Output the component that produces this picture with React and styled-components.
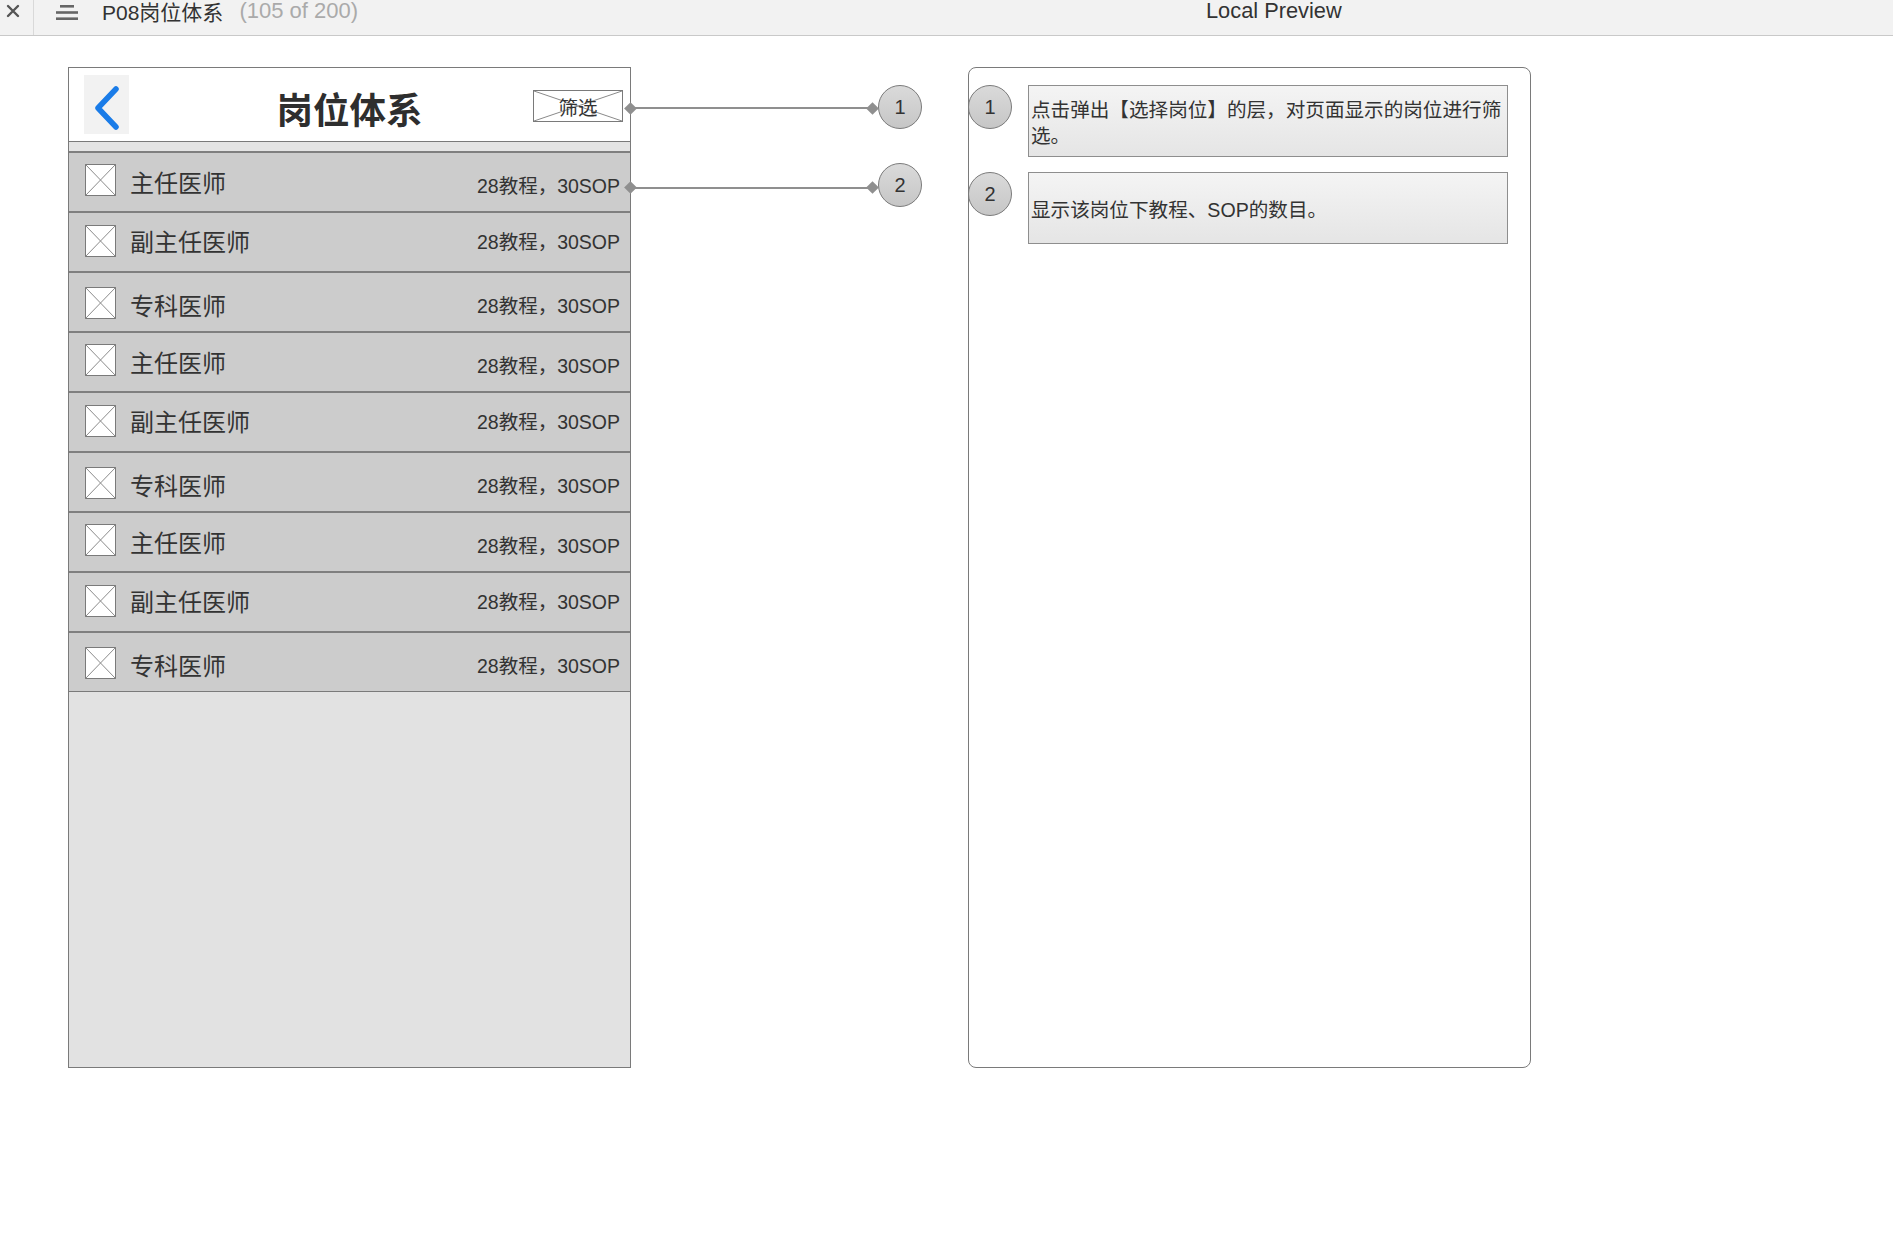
import React from "react";
import styled, { createGlobalStyle } from "styled-components";

const Global = createGlobalStyle`
  html, body { margin: 0; padding: 0; background: #ffffff; }
  body { font-family: "Liberation Sans", "Noto Sans CJK SC", sans-serif; color: #333333; }
  * { box-sizing: border-box; }
`;

const FONT = `"Liberation Sans", "Noto Sans CJK SC", sans-serif`;

const Page = styled.div`
  width: 1893px;
  min-height: 1245px;
  background: #ffffff;
`;

/* ---------- top bar ---------- */
const TopBar = styled.header`
  height: 36px;
  background: #f2f2f2;
  border-bottom: 1px solid #c9c9c9;
  display: flex;
  align-items: flex-start;
`;

const CloseCell = styled.div`
  width: 34px;
  height: 35px;
  border-right: 1px solid #d9d9d9;
  display: flex;
  justify-content: center;
  padding-top: 4px;
  padding-right: 7px;
`;

const LeftGroup = styled.div`
  flex: 0 0 1172px;
  height: 22px;
  display: flex;
  align-items: center;
  padding-left: 22px;
`;

const Menu = styled.div`
  display: flex;
  align-items: center;
  margin-right: 22px;
  padding-top: 4px;
`;

const DocTitle = styled.span`
  font-family: ${FONT};
  font-size: 21px;
  color: #333333;
  white-space: nowrap;
`;

const DocCount = styled.span`
  font-family: ${FONT};
  font-size: 22px;
  color: #aaaaaa;
  margin-left: 16px;
  white-space: nowrap;
`;

const PreviewLabel = styled.div`
  height: 22px;
  display: flex;
  align-items: center;
  font-family: ${FONT};
  font-size: 21.8px;
  color: #333333;
  white-space: nowrap;
`;

/* ---------- canvas ---------- */
const Canvas = styled.main`
  display: flex;
  align-items: flex-start;
  padding: 31px 0 0 68px;
`;

/* ---------- phone ---------- */
const Phone = styled.section`
  width: 563px;
  height: 1001px;
  border: 1px solid #7a7a7a;
  background: #e2e2e2;
  display: flex;
  flex-direction: column;
`;

const Header = styled.div`
  height: 74px;
  flex: 0 0 74px;
  background: #ffffff;
  border-bottom: 1px solid #7a7a7a;
  display: grid;
  grid-template-columns: 1fr auto 1fr;
  align-items: center;
  padding: 0 7px;
`;

const BackButton = styled.div`
  width: 45px;
  height: 59px;
  margin-left: 8px;
  background: #f2f2f2;
  display: flex;
  align-items: center;
  justify-content: center;
  justify-self: start;
  padding-top: 7px;
`;

const Title = styled.h1`
  margin: 8px 0 0;
  font-family: ${FONT};
  font-size: 36.5px;
  font-weight: 700;
  color: #2e2e2e;
`;

const FilterButton = styled.div`
  justify-self: end;
  position: relative;
  width: 90px;
  height: 32px;
  background: #ffffff;
  border: 1px solid #7a7a7a;
  display: flex;
  align-items: center;
  justify-content: center;
  margin-top: 3px;
`;

const FilterCross = styled.svg`
  position: absolute;
  inset: 0;
  width: 100%;
  height: 100%;
`;

const FilterText = styled.span`
  position: relative;
  font-family: ${FONT};
  font-size: 19.5px;
  color: #333333;
`;

const Strip = styled.div`
  height: 9px;
  flex: 0 0 9px;
  background: #e4e4e4;
`;

const List = styled.div`
  display: flex;
  flex-direction: column;
  border-bottom: 1px solid #7a7a7a;
`;

const Row = styled.div`
  height: 60px;
  background: #cccccc;
  border-top: 2px solid #7f7f7f;
  display: flex;
  align-items: center;
  padding: 0 10px 0 16px;
`;

const Thumb = styled.svg`
  flex: 0 0 31px;
  width: 31px;
  height: 32px;
  margin-top: ${(p) => p.$dy * 2}px;
`;

const RoleName = styled.span`
  margin-left: 14px;
  font-family: ${FONT};
  font-size: 24px;
  color: #333333;
  margin-top: ${(p) => p.$dy * 2}px;
  white-space: nowrap;
`;

const RoleStats = styled.span`
  margin-left: auto;
  font-family: ${FONT};
  font-size: 19.5px;
  color: #333333;
  margin-top: ${(p) => p.$dy * 2}px;
  white-space: nowrap;
`;

/* ---------- annotation markers ---------- */
const MarkerColumn = styled.div`
  width: 337px;
  padding-top: 18px;
  display: flex;
  flex-direction: column;
  gap: 34px;
`;

const Marker = styled.div`
  height: 44px;
  display: flex;
  align-items: center;
`;

const Lead = styled.div`
  position: relative;
  width: 242px;
  height: 2px;
  background: #8f8f8f;
  margin-left: -1px;
  margin-top: ${(p) => p.$dy * 2}px;

  &::before,
  &::after {
    content: "";
    position: absolute;
    top: -3.5px;
    width: 9px;
    height: 9px;
    background: #8f8f8f;
    transform: rotate(45deg);
  }
  &::before { left: -4.5px; }
  &::after { right: -4.5px; }
`;

const Badge = styled.div`
  flex: 0 0 44px;
  width: 44px;
  height: 44px;
  border-radius: 50%;
  border: 1.5px solid #7a7a7a;
  background: linear-gradient(180deg, #dadada 0%, #c6c6c6 100%);
  display: flex;
  align-items: center;
  justify-content: center;
  font-family: ${FONT};
  font-size: 20px;
  color: #333333;
  margin-left: ${(p) => p.$gap || 0}px;
`;

/* ---------- notes panel ---------- */
const Notes = styled.section`
  width: 563px;
  height: 1001px;
  border: 1px solid #7a7a7a;
  border-radius: 8px;
  background: #ffffff;
  padding-top: 17px;
  display: flex;
  flex-direction: column;
  gap: 15px;
`;

const NoteRow = styled.div`
  display: flex;
  align-items: flex-start;
  margin-left: -1px;
`;

const NoteBox = styled.div`
  width: 480px;
  min-height: 72px;
  margin-left: 16px;
  border: 1px solid #8e8e8e;
  background: linear-gradient(180deg, #f4f4f4 0%, #e5e5e5 100%);
  display: flex;
  align-items: center;
  padding: 4px 2px 0;
  font-family: ${FONT};
  font-size: 19.6px;
  line-height: 26px;
  color: #333333;
`;

const Cross = (props) => (
  <Thumb viewBox="0 0 31 32" preserveAspectRatio="none" {...props}>
    <rect x="0.5" y="0.5" width="30" height="31" fill="#ffffff" stroke="#7a7a7a" strokeWidth="1" />
    <line x1="0.5" y1="0.5" x2="30.5" y2="31.5" stroke="#8a8a8a" strokeWidth="1" />
    <line x1="30.5" y1="0.5" x2="0.5" y2="31.5" stroke="#8a8a8a" strokeWidth="1" />
  </Thumb>
);

const ROLES = [
  { name: "主任医师", t: -2.5, n: -0.5, s: 2 },
  { name: "副主任医师", t: -1.5, n: -2, s: -2 },
  { name: "专科医师", t: 1, n: 2.5, s: 2 },
];

const rows = Array.from({ length: 9 }, (_, i) => ROLES[i % 3]);

export default function App() {
  return (
    <Page>
      <Global />
      <TopBar>
        <CloseCell>
          <svg width="14" height="14" viewBox="0 0 14 14">
            <path d="M2 2 L12 12 M12 2 L2 12" stroke="#555555" strokeWidth="2.4" strokeLinecap="round" />
          </svg>
        </CloseCell>
        <LeftGroup>
          <Menu>
            <svg width="24" height="16" viewBox="0 0 24 16">
              <rect x="4" y="0" width="14" height="2.6" fill="#666666" />
              <rect x="0" y="6.2" width="22" height="2.6" fill="#666666" />
              <rect x="0" y="12.4" width="22" height="2.6" fill="#666666" />
            </svg>
          </Menu>
          <DocTitle>P08岗位体系</DocTitle>
          <DocCount>(105 of 200)</DocCount>
        </LeftGroup>
        <PreviewLabel>Local Preview</PreviewLabel>
      </TopBar>

      <Canvas>
        <Phone>
          <Header>
            <BackButton>
              <svg width="28" height="44" viewBox="0 0 28 44">
                <polyline points="23,3 5,22 23,41" fill="none" stroke="#1a7ce8" strokeWidth="5.5" strokeLinecap="round" strokeLinejoin="round" />
              </svg>
            </BackButton>
            <Title>岗位体系</Title>
            <FilterButton>
              <FilterCross viewBox="0 0 88 30" preserveAspectRatio="none">
                <line x1="0" y1="0" x2="88" y2="30" stroke="#8a8a8a" strokeWidth="1" />
                <line x1="88" y1="0" x2="0" y2="30" stroke="#8a8a8a" strokeWidth="1" />
              </FilterCross>
              <FilterText>筛选</FilterText>
            </FilterButton>
          </Header>
          <Strip />
          <List>
            {rows.map((r, i) => (
              <Row key={i}>
                <Cross $dy={r.t} />
                <RoleName $dy={r.n}>{r.name}</RoleName>
                <RoleStats $dy={r.s}>28教程，30SOP</RoleStats>
              </Row>
            ))}
          </List>
        </Phone>

        <MarkerColumn>
          <Marker>
            <Lead $dy={1} />
            <Badge $gap={6}>1</Badge>
          </Marker>
          <Marker>
            <Lead $dy={2.5} />
            <Badge $gap={6}>2</Badge>
          </Marker>
        </MarkerColumn>

        <Notes>
          <NoteRow>
            <Badge>1</Badge>
            <NoteBox>点击弹出【选择岗位】的层，对页面显示的岗位进行筛选。</NoteBox>
          </NoteRow>
          <NoteRow>
            <Badge>2</Badge>
            <NoteBox>显示该岗位下教程、SOP的数目。</NoteBox>
          </NoteRow>
        </Notes>
      </Canvas>
    </Page>
  );
}
